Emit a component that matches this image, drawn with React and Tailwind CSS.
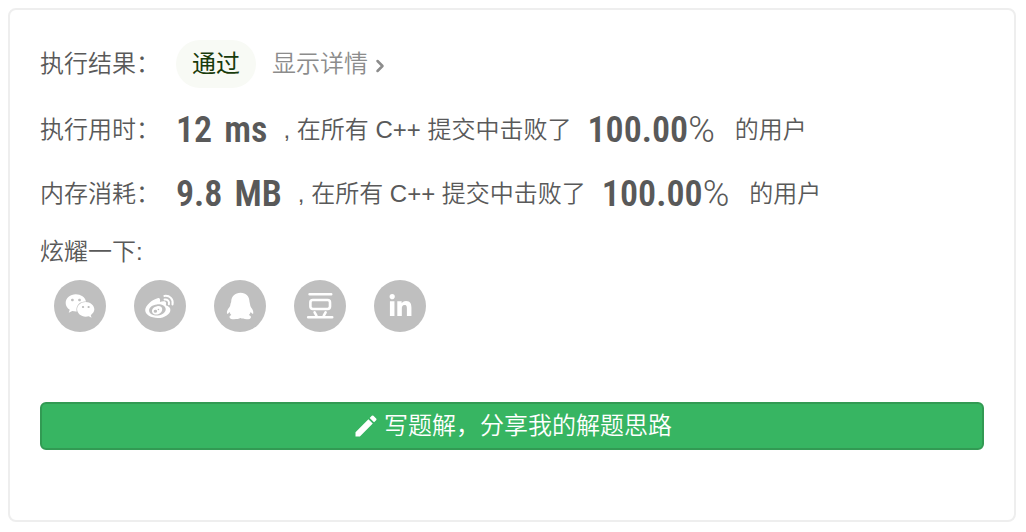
import React from "react";
import { FaWeixin, FaLinkedinIn } from "react-icons/fa";
import { FiChevronRight } from "react-icons/fi";
import { MdEdit } from "react-icons/md";

const DoubanIcon = ({ size }) => (
  <svg width={size} height={size} viewBox="0 0 28 28" fill="none" stroke="currentColor" strokeWidth="2.6" strokeLinecap="round">
    <path d="M3.6 2.2h21.6M2.2 25.2h24M8.6 20.4l1.8 3.2M19.6 20.4l-1.8 3.2" />
    <rect x="4.4" y="8" width="19.6" height="9" rx="2.4" />
  </svg>
);

const QqIcon = ({ size }) => (
  <svg width={size} height={size} viewBox="0 0 28 28" fill="currentColor">
    <path d="M14.6 .8C9 .8 5.4 4.6 5.2 9.6c0 1-.7 1.8-.8 2.8 0 1-.5 2-1.2 3C1.7 17.2.8 19 .9 20.9c.1 1.4.9 1.3 2.6-.9.4 1.2 1 2.2 1.8 3.1-1.4.6-1.9 1.3-1.7 2.3.3 1.4 2 1.8 4.5 1.8 2.8 0 5-.4 6.3-1.2 1.6.8 3.6 1.2 6.2 1.2 2.5 0 4.1-.4 4.3-1.8.1-1-.5-1.7-2-2.3.8-.9 1.4-1.9 1.8-3.1 1.6 2 2.4 2.3 2.6.9.1-2-.9-3.7-2.2-5.4-.7-1-.9-2-1-3 0-1-.5-1.8-.6-2.8C23.3 4.6 20.2.8 14.6.8Z" />
  </svg>
);

const WeiboIcon = ({ size }) => (
  <svg width={size} height={size} viewBox="0 0 30 30" fill="currentColor">
    <path
      fillRule="evenodd"
      d="M12.6 7.2c2-.6 3 .8 2.3 3.9 3.2-1.2 6.400-1.100 6.200 1.400 0 .8-.6 1.700.3 2.100 2.400.8 4 2.100 4 4.300 0 4-5.700 8.100-12.600 8.100C5.800 27 .2 23.900.2 19.100.2 14.600 7.300 8.400 12.600 7.200ZM12 13.400c-4.700.3-8.100 3.100-7.900 6.300.2 3.100 4.100 5.100 8.700 4.800 4.700-.4 8.100-3.300 7.900-6.400-.2-3.200-4-5.100-8.700-4.700Z"
    />
    <path
      fillRule="evenodd"
      d="M12.2 15.200c3-.6 5.400 1 5 3.600-.4 2.700-3.200 4.800-6.100 4.800-2.800 0-4.600-2-4-4.500.5-2 2.600-3.600 5.100-3.900ZM10.200 18.700a1.700 1.500 0 1 0 .4 3 1.700 1.500 0 0 0-.4-3Zm3.200-1a.8.8 0 1 0 .1 1.600.8.8 0 0 0-.1-1.600Z"
    />
    <path d="M19.400 4.900c5.200-.8 9.200 3.200 8.100 8.600M19.600 8.500c3-.3 5 1.700 4.300 4.700" fill="none" stroke="currentColor" strokeWidth="2" strokeLinecap="round" />
  </svg>
);

const shares = [
  { name: "微信", icon: <FaWeixin size={30} /> },
  { name: "微博", icon: <WeiboIcon size={30} /> },
  { name: "QQ", icon: <QqIcon size={28} /> },
  { name: "豆瓣", icon: <DoubanIcon size={28} /> },
  { name: "LinkedIn", icon: <FaLinkedinIn size={25} /> },
];

const metrics = [
  { label: "执行用时：", value: "12", unit: "ms", percent: "100.00" },
  { label: "内存消耗：", value: "9.8", unit: "MB", percent: "100.00" },
];

const numberFont = "font-['Roboto_Condensed','Roboto',sans-serif] text-4xl font-semibold";

const Metric = ({ label, value, unit, percent }) => (
  <div className="flex h-16 items-center whitespace-nowrap">
    <span className="w-[136px] shrink-0">{label}</span>
    <span className={`${numberFont} flex gap-3`}>
      <span>{value}</span>
      <span>{unit}</span>
    </span>
    <span className="ml-4">, 在所有 C++ 提交中击败了</span>
    <span className={`${numberFont} ml-4`}>
      {percent}
      <span className="font-['Roboto',sans-serif] font-light">%</span>
    </span>
    <span className="ml-5">的用户</span>
  </div>
);

const App = () => {
  return (
    <div className="bg-white pt-2 pr-2.5 pb-2.5 pl-2 font-['Liberation_Sans','Noto_Sans_CJK_SC',sans-serif] text-2xl font-[350] text-[#595959]">
      <main className="rounded-lg border-2 border-[#eeeeee] px-[30px] pt-[30px] pb-[70px]">
        {/* Result */}
        <div className="flex h-12 items-center">
          <span className="w-[136px] shrink-0">执行结果：</span>
          <span className="flex h-12 items-center rounded-full bg-[#f8faf5] px-4 font-normal text-[#183b0b]">通过</span>
          <a href="#detail" className="ml-4 flex items-center gap-0.5 text-[#8c8c8c]">
            显示详情
            <FiChevronRight size={20} strokeWidth={3} className="mt-1" />
          </a>
        </div>

        {/* Runtime and memory */}
        <div className="mt-2.5">
          {metrics.map((metric) => (
            <Metric key={metric.label} {...metric} />
          ))}
        </div>

        {/* Share */}
        <div className="mt-2.5 leading-8">炫耀一下:</div>
        <div className="mt-3 flex gap-7 pl-3.5">
          {shares.map((share) => (
            <button
              key={share.name}
              type="button"
              aria-label={share.name}
              className="flex size-[52px] items-center justify-center rounded-full bg-[#bfbfbf] text-white"
            >
              {share.icon}
            </button>
          ))}
        </div>

        <button
          type="button"
          className="mt-[70px] flex h-12 w-full items-center justify-center gap-1 rounded-md border-2 border-[#329a53] bg-[#37b562] text-white"
        >
          <MdEdit size={28} />
          写题解，分享我的解题思路
        </button>
      </main>
    </div>
  );
};

export default App;
